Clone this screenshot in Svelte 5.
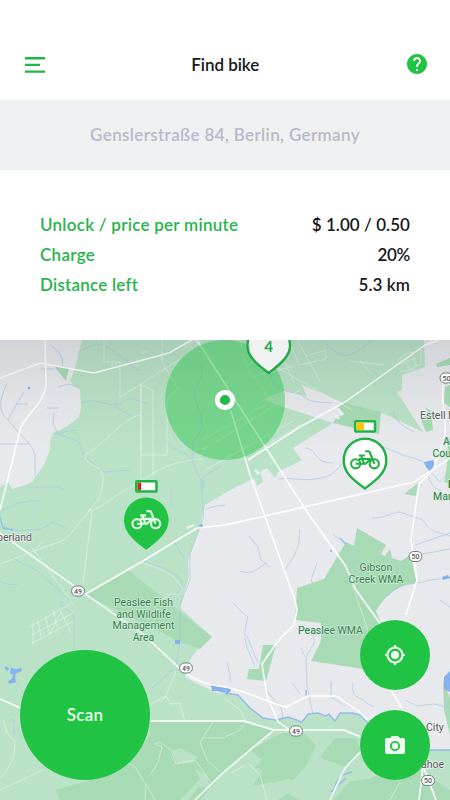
<script>
  const details = [
    { label: 'Unlock / price per minute', value: '$ 1.00 / 0.50', labelSpacing: 0.26, valueSpacing: 0.05 },
    { label: 'Charge', value: '20%', labelSpacing: 0.3, valueSpacing: -0.3 },
    { label: 'Distance left', value: '5.3 km', labelSpacing: 0.22, valueSpacing: 0.1 }
  ];

  const streams = [
    'M7 384C-2 402-1 413 8 420C22 437 35 446 35 458V477', 'M8 420L17 403L24 392M16 404H28', 'M0 444H30',
    'M50 345C60 351 64 358 62 367M41 369H54M58 387L69 384L80 388',
    'M47 408H59M54 412L53 424L58 434L79 442L84 456L104 472L130 470M54 434L75 430',
    'M81 403C99 396 109 410 123 402C133 394 141 404 148 403M115 406L131 416',
    'M78 352C100 340 107 345 116 354C126 359 132 367 140 371',
    'M160 345L167 355M200 363C207 381 190 389 195 400C205 422 204 429 193 442V462L204 488',
    'M165 440C178 456 190 451 193 462M220 466C212 474 202 470 200 490',
    'M270 365C269 386 279 391 301 394C310 405 325 401 332 403M320 338C343 362 350 356 360 349L375 338',
    'M278 479C294 476 308 485 332 474C344 464 350 453 364 447C381 440 397 456 414 458L426 463',
    'M305 448C319 450 313 463 333 463M393 411C397 427 412 430 414 432',
    'M27 487H60L65 491M2 510L19 503L30 501H40M2 526C25 535 46 529 53 522L67 529',
    'M0 581Q8 586 18 584M61 601C58 609 75 610 74 620V650M11 556C23 566 41 570 43 576L75 605',
    'M204 480C199 493 205 507 203 519L190 554V580L180 604V640L176 666',
    'M171 489V506M174 541L183 557M141 560C154 566 172 568 181 580C184 588 178 595 171 596L162 602',
    'M205 510C212 506 217 506 225 505M249 536L258 547L261 560L270 567M240 571C253 576 260 567 267 562',
    'M299 529C302 551 288 563 285 570M317 563C312 578 309 583 314 583M333 534L346 545L355 552',
    'M372 518C384 518 391 513 400 512L423 520C430 534 443 533 450 536M415 545L450 533',
    'M416 555L434 552L450 549M388 596C402 580 415 586 429 580L450 578M440 600L450 607',
    'M233 603L242 612L248 617C244 629 244 640 248 650L255 666',
    'M311 635C318 641 312 646 306 657L307 686L313 714M301 648L305 657',
    'M292 683L300 694M331 681V697L345 706M353 683C350 700 362 696 368 704L374 707',
    'M405 700L417 706L434 704L450 708M8 664L18 674L21 666M14 680L31 702',
    'M10 720H14V734M152 688L173 670M227 662L230 675V682M247 636L258 663M267 691L281 708L283 718',
    'M428 466C427 482 435 490 441 490M430 471L440 482L444 477'
  ];
  const localRoads = [
    'M104 340V362M104 362H120V397L179 360L190 352M112 362V367M116 362V367M162 340V362L178 389L167 400V455H141V384L153 391V475M141 384V480',
    'M141 352H149M141 415C123 417 110 440 85 455C87 470 105 462 103 481C101 503 95 501 88 513C73 528 70 541 53 544L0 564',
    'M88 511C105 508 120 490 137 484C155 471 170 461 203 459M92 511L83 583',
    'M240 340L246 366L275 406M269 363L352 410M277 345L294 383M297 340L320 381M252 377L294 366',
    'M289 341L299 365L326 359V350L306 356M202 440L265 405M202 450L300 390M205 470L295 420M250 455L300 425',
    'M350 361L385 365M360 361L372 374M394 367L402 355L421 350V364L410 369M400 364L416 358M400 372L415 369M404 356L410 370M411 353L417 366',
    'M183 350L190 344L196 340M186 354L203 339M190 345L194 351M194 340L200 346',
    'M35 551L41 542M32 548L74 605M30 627L70 604M32 635L73 613M32 643L74 621M33 623V644M38 620L41 637M45 616L50 634L61 612L71 633M53 610L59 635',
    'M141 563C164 569 176 576 182 588C181 599 173 592 169 595L158 602M150 705L166 696L176 671M161 702L166 696L171 704L180 703L185 722',
    'M3 720L7 733L15 742C15 760 10 766 0 778M0 790L45 769M128 763C140 767 139 778 146 784L145 800M146 784L155 800',
    'M150 775L158 763L162 747L155 744L160 742L171 750L176 764L195 760L211 782M213 722L200 742L207 760L220 772M202 738H225',
    'M225 699L240 710L246 722L240 730L225 737M249 764L260 775L267 800M246 765L231 773M400 782L390 800M352 585L368 630'
  ];
  const mainRoads = [
    'M0 378L40 363L94 373L169 353L197 337', 'M45 337L46 385C43 407 25 413 20 430L0 510',
    'M0 533L84 593L144 635L176 665C195 683 214 686 225 687C244 690 269 703 286 707L308 696H336L357 710L372 724',
    'M84 595L143 561L197 528L225 525L414 482L450 458', 'M187 528L194 525',
    'M248 460L300 427L345 402L425 345L450 336',
    'M231 411L250 475L295 600L297 610L294 625L278 641L262 664L267 696L278 722L290 730H344L363 738',
    'M195 337L234 398L309 515L345 565L356 590L382 626M450 385L445 375C439 394 446 410 445 436L433 470L419 484L411 540L417 580L406 615',
    'M150 721H225L244 721L274 730L291 730M274 730L225 771L195 800M330 800L345 768L364 748M0 699L25 710M391 690L402 708M423 766L419 800M423 766L436 800'
  ];
</script>

{#snippet bike(x, y, color)}
  <g transform="translate({x} {y})" fill="none" stroke={color} stroke-width="2.1" stroke-linecap="butt" stroke-linejoin="round">
    <circle cx="-9.3" cy="4" r="4.6" />
    <circle cx="9.3" cy="4" r="4.6" />
    <path d="M-6.2-4.3H-.2M-3.9-4.3L-.9 4M-9.3 4H.6L5.8-1M-6-.8H5.8M.2-8.6H3.2Q4.4-8.6 4.9-7.3L9.3 4" />
  </g>
{/snippet}

{#snippet shield(x, y, number)}
  <g class="shield">
    <rect x={x - 6.4} y={y - 5} width="12.8" height="10" rx="4.8" />
    <text {x} y={y + 2.6}>{number}</text>
  </g>
{/snippet}

<main>
  <header>
    <button aria-label="Menu">
      <svg width="20" height="16" viewBox="0 0 20 16" fill="#20b547"><path d="M0 0H20V2.4H0ZM0 6.7H15V9.1H0ZM0 13.4H20V15.8H0Z" /></svg>
    </button>
    <h1>Find bike</h1>
    <button aria-label="Help">
      <svg width="20" height="20" viewBox="2 2 20 20" fill="#20c344"><path d="M12 2C6.48 2 2 6.48 2 12s4.48 10 10 10 10-4.48 10-10S17.52 2 12 2zm1 17h-2v-2h2v2zm2.07-7.75l-.9.92C13.45 12.9 13 13.5 13 15h-2v-.5c0-1.1.45-2.1 1.17-2.83l1.24-1.26c.37-.36.59-.86.59-1.41 0-1.1-.9-2-2-2s-2 .9-2 2H8c0-2.21 1.79-4 4-4s4 1.79 4 4c0 .88-.36 1.68-.93 2.25z" /></svg>
    </button>
  </header>

  <div class="address">Genslerstraße 84, Berlin, Germany</div>

  <dl>
    {#each details as item}
      <div class="row">
        <dt style="letter-spacing: {item.labelSpacing}px">{item.label}</dt>
        <dd style="letter-spacing: {item.valueSpacing}px">{item.value}</dd>
      </div>
    {/each}
  </dl>

  <section class="map">
    <svg class="canvas" width="450" height="460" viewBox="0 340 450 460">
      <defs>
        <linearGradient id="shade" x1="0" y1="0" x2="0" y2="1">
          <stop offset="0" stop-color="#344" stop-opacity=".13" />
          <stop offset=".5" stop-color="#344" stop-opacity=".045" />
          <stop offset="1" stop-color="#344" stop-opacity="0" />
        </linearGradient>
      </defs>
      <rect y="340" width="450" height="460" fill="#bae2c6" />
      <g fill="#e8e9ed">
        <path d="M0 340H82L79 352L76 365L70 381L75 387L80 389L81 410L78 418L66 427L53 433L50 441V450L44 465L32 482L22 486L12 489L8 482L0 487Z" />
        <path d="M424 340L425 367L402 375V390L397 392L423 432L380 412L342 402L302 385L307 397L285 390L262 400L333 423L293 448L302 460L278 472L275 478L267 468L260 471L263 482L257 486L254 478L225 493L205 505L200 527L188 560L189 577L180 608L212 637L197 650L190 660L185 677L200 685L217 693L238 695L250 708L263 718L276 720L288 717L302 722L308 714L318 713L325 716L329 714L335 721L340 713L352 713L360 715L375 730L432 750L450 749V340Z" />
      </g>
      <g fill="#a8dab5">
        <path d="M54 366L69 368L66 381Z" />
        <path d="M342 402L381 412L379 434L333 423L336 418L342 415L338 408Z" />
        <path d="M128 570L212 637L200 649L178 641L151 627L84 594Z" />
        <path d="M357 528L386 545L381 554L385 556L390 549L392 558L401 561L410 555L413 566L416 580V583C397 586 388 592 376 611L388 640L410 676L311 661L321 641V623L295 620L297 588L324 579L346 542L354 546Z" />
        <path d="M418 483L416 496L404 494ZM263 645H276L266 681L247 679L249 669H259Z" />
        <path d="M436 364L450 358V365L437 367ZM445 387L450 385V407L444 403ZM421 420L428 412L425 407L431 411L433 430L426 432Z" />
        <path d="M448 440L450 437V484L444 482L447 464ZM443 680L450 698V735L444 710Z" />
        <path d="M150 722H242L274 731L225 771L200 800H60L56 790L90 780L130 762L150 735Z" />
        <path d="M282 733H304L316 746L306 766L294 779L278 787L300 800H225L262 760L250 750Z" />
        <path d="M335 738H355L361 750L346 768L320 757Z" />
        <path d="M370 779L402 760L430 777L450 790V800H334L350 781Z" />
      </g>
      <g fill="#bae2c6">
        <path d="M172 751L181 748L197 757L193 763L178 764ZM195 769L207 775L211 789L198 787L189 800H180L200 779Z" />
        <path d="M225 780L249 764L263 771L252 786L290 779L301 784L278 800H225Z" />
      </g>
      <g class="streams">{#each streams as d}<path {d} />{/each}</g>
      <g class="streams thick">
        <path d="M225 693L238 695L250 708L263 718L276 720L288 717L302 722L308 714L318 713L325 716L329 714L335 721L340 713L352 713L360 715L375 730" />
        <path d="M425 750H450M0 517L3 528L13 530M340 538L346 544M306 690V696M335 785L342 775L352 772M331 792L346 778" />
      </g>
      <g fill="#86b1ef">
        <path d="M424 462L433 460L435 466L430 471L426 467ZM442 577L448 575L450 578L443 580ZM211 685L216 686L221 687L225 687V693L217 691L212 691ZM225 687L231 688L230 692L226 695Z" />
        <path d="M5 666L9 668L8 671L5 669ZM11 668L16 669L21 668L22 671L16 673L15 677L16 682L9 684L8 681L12 679L13 675L10 673ZM175 640H180V644H175ZM444 677L450 671V692L444 689Z" />
        <circle cx="29" cy="388" r="1.3" /><circle cx="331" cy="551" r="1" /><circle cx="201" cy="526" r="2" />
      </g>
      <g class="local">{#each localRoads as d}<path {d} />{/each}</g>
      <path d="M338 409L343 415M334 413L339 419M255 470L259 474" stroke="#eef0f2" stroke-width="3" />
      <g class="main">{#each mainRoads as d}<path {d} />{/each}</g>
      <rect y="340" width="450" height="110" fill="url(#shade)" />

      <circle cx="225" cy="400" r="60" fill="#20c344" fill-opacity=".43" />
      <circle cx="225" cy="400" r="7.6" fill="#20b945" stroke="#fff" stroke-width="5" />

      {@render shield(78, 591, '49')}
      {@render shield(186, 668, '49')}
      {@render shield(296, 731, '49')}
      {@render shield(415.5, 556.5, '50')}
      {@render shield(446.5, 378, '50')}
      {@render shield(428, 780.5, '50')}

      <g class="place">
        <text x="32" y="541" text-anchor="end">berland</text>
        <text x="420" y="419">Estell Manor</text>
        <text x="426" y="731">City</text>
        <text x="444" y="768" text-anchor="end">Tuckahoe</text>
      </g>
      <g class="place park">
        <text x="143.5" y="606" text-anchor="middle">Peaslee Fish</text>
        <text x="143.5" y="617.7" text-anchor="middle">and Wildlife</text>
        <text x="143.5" y="629.4" text-anchor="middle">Management</text>
        <text x="143.5" y="641" text-anchor="middle">Area</text>
        <text x="376" y="570.5" text-anchor="middle">Gibson</text>
        <text x="376" y="582.5" text-anchor="middle">Creek WMA</text>
        <text x="298" y="634">Peaslee WMA</text>
        <text x="443" y="445">Atlantic</text>
        <text x="432.5" y="457">County</text>
        <text x="448" y="488" font-weight="700">E</text>
        <text x="433" y="500">Manor</text>
      </g>

      <path d="M247.5 346C247.5 333 256 324 268.7 324S290 333 290 346C290 358 276 367 268.7 373C261 367 247.5 358 247.5 346Z" fill="#f0f1f1" stroke="#20a944" stroke-width="2.4" />
      <text class="cluster" x="268.7" y="352.3">4</text>

      <path d="M124 520.3C124 507.6 134 497.6 146.2 497.6S168.6 507.6 168.6 520.3C168.6 532.5 158 541 146.2 549.8C134 541 124 532.5 124 520.3Z" fill="#20c344" />
      {@render bike(146.3, 519.7, '#e7fbea')}
      <rect x="136.3" y="481.3" width="20.2" height="10.2" rx=".7" fill="#fff" stroke="#20b545" stroke-width="2.5" />
      <path d="M137.6 482.6H141.2V490.2H137.6Z" fill="#cd2918" />

      <path d="M343.7 460.5C343.7 448 353.2 438.7 365 438.7S386.3 448 386.3 460.5C386.3 472.4 376.5 480 365 488.4C353 480 343.7 472.4 343.7 460.5Z" fill="#fff" stroke="#20b044" stroke-width="2.4" />
      {@render bike(365, 459.8, '#20b044')}
      <rect x="355.2" y="421.2" width="19.8" height="10.2" rx=".7" fill="#fff" stroke="#20b545" stroke-width="2.5" />
      <path d="M356.5 422.5H364V430.1H356.5Z" fill="#ffc40b" />
    </svg>

    <div class="controls">
      <button class="scan">Scan</button>
      <div class="tools">
        <button aria-label="My location">
          <svg width="20" height="20" viewBox="1.5 1.5 21 21" fill="none" stroke="#effcf0" stroke-width="2.3"><circle cx="12" cy="12" r="7.9" /><path d="M12 1.5V4.5M12 19.5V22.5M1.5 12H4.5M19.5 12H22.5" /><circle cx="12" cy="12" r="4.2" fill="#effcf0" stroke="none" /></svg>
        </button>
        <button aria-label="Camera">
          <svg width="20" height="18" viewBox="2 2 20 18" fill="#effcf0"><circle cx="12" cy="12" r="3.2" /><path d="M9 2L7.17 4H4c-1.1 0-2 .9-2 2v12c0 1.1.9 2 2 2h16c1.1 0 2-.9 2-2V6c0-1.1-.9-2-2-2h-3.17L15 2H9zm3 15c-2.76 0-5-2.24-5-5s2.24-5 5-5 5 2.24 5 5-2.24 5-5 5z" /></svg>
        </button>
      </div>
    </div>
  </section>
</main>

<style>
  main {
    width: 450px;
    height: 800px;
    display: flex;
    flex-direction: column;
    overflow: hidden;
    background: #fff;
    font: 600 17px/20px Lato, sans-serif;
    color: #171819;
  }
  button { border: 0; padding: 0; background: none; font: inherit; color: inherit; }
  header {
    height: 100px;
    box-sizing: border-box;
    padding: 30px 22.5px 0 25px;
    display: flex;
    align-items: center;
    justify-content: space-between;
  }
  header button { display: flex; margin-bottom: 1px; }
  header button:last-child { margin-bottom: 3px; }
  h1 { margin: 0 0 0 -2px; font: inherit; letter-spacing: -.05px; }
  .address {
    height: 70px;
    display: flex;
    align-items: center;
    justify-content: center;
    background: #eff0f2;
    color: #b7bac9;
    letter-spacing: .36px;
  }
  dl {
    height: 170px;
    box-sizing: border-box;
    margin: 0;
    padding: 45px 40px 0;
    display: flex;
    flex-direction: column;
    gap: 10px;
  }
  .row { display: flex; justify-content: space-between; height: 20px; white-space: nowrap; }
  dt { color: #26b44a; }
  dd { margin: 0; }
  .map { position: relative; height: 460px; overflow: hidden; }
  .canvas { display: block; }
  .streams { fill: none; stroke: #a7c7e7; stroke-width: .8; stroke-opacity: .85; }
  .thick { stroke: #8bb5ed; stroke-width: 1.4; }
  .local { fill: none; stroke: #edf7ef; stroke-opacity: .65; stroke-width: .8; }
  .main { fill: none; stroke: #fff; stroke-width: 1.5; stroke-linejoin: round; }
  .shield rect { fill: #fff; stroke: #73787a; stroke-width: 1; }
  .shield text { font: 500 7px Roboto, sans-serif; fill: #555; text-anchor: middle; }
  .place { font: 400 10.5px Roboto, sans-serif; fill: #54585c; stroke: #f3f6f4; stroke-width: 1.3; paint-order: stroke; }
  .park { fill: #31804d; stroke: #d5eddb; }
  .cluster { font: 700 15px Lato, sans-serif; fill: #20a944; text-anchor: middle; }
  .controls {
    position: absolute;
    inset: auto 20px 20px;
    display: flex;
    align-items: flex-end;
    justify-content: space-between;
  }
  .controls button {
    width: 70px;
    height: 70px;
    border-radius: 50%;
    display: flex;
    align-items: center;
    justify-content: center;
    background: #20c344;
  }
  .controls .scan { width: 130px; height: 130px; color: #e9fbec; letter-spacing: .3px; }
  .tools { display: flex; flex-direction: column; gap: 20px; }
</style>
